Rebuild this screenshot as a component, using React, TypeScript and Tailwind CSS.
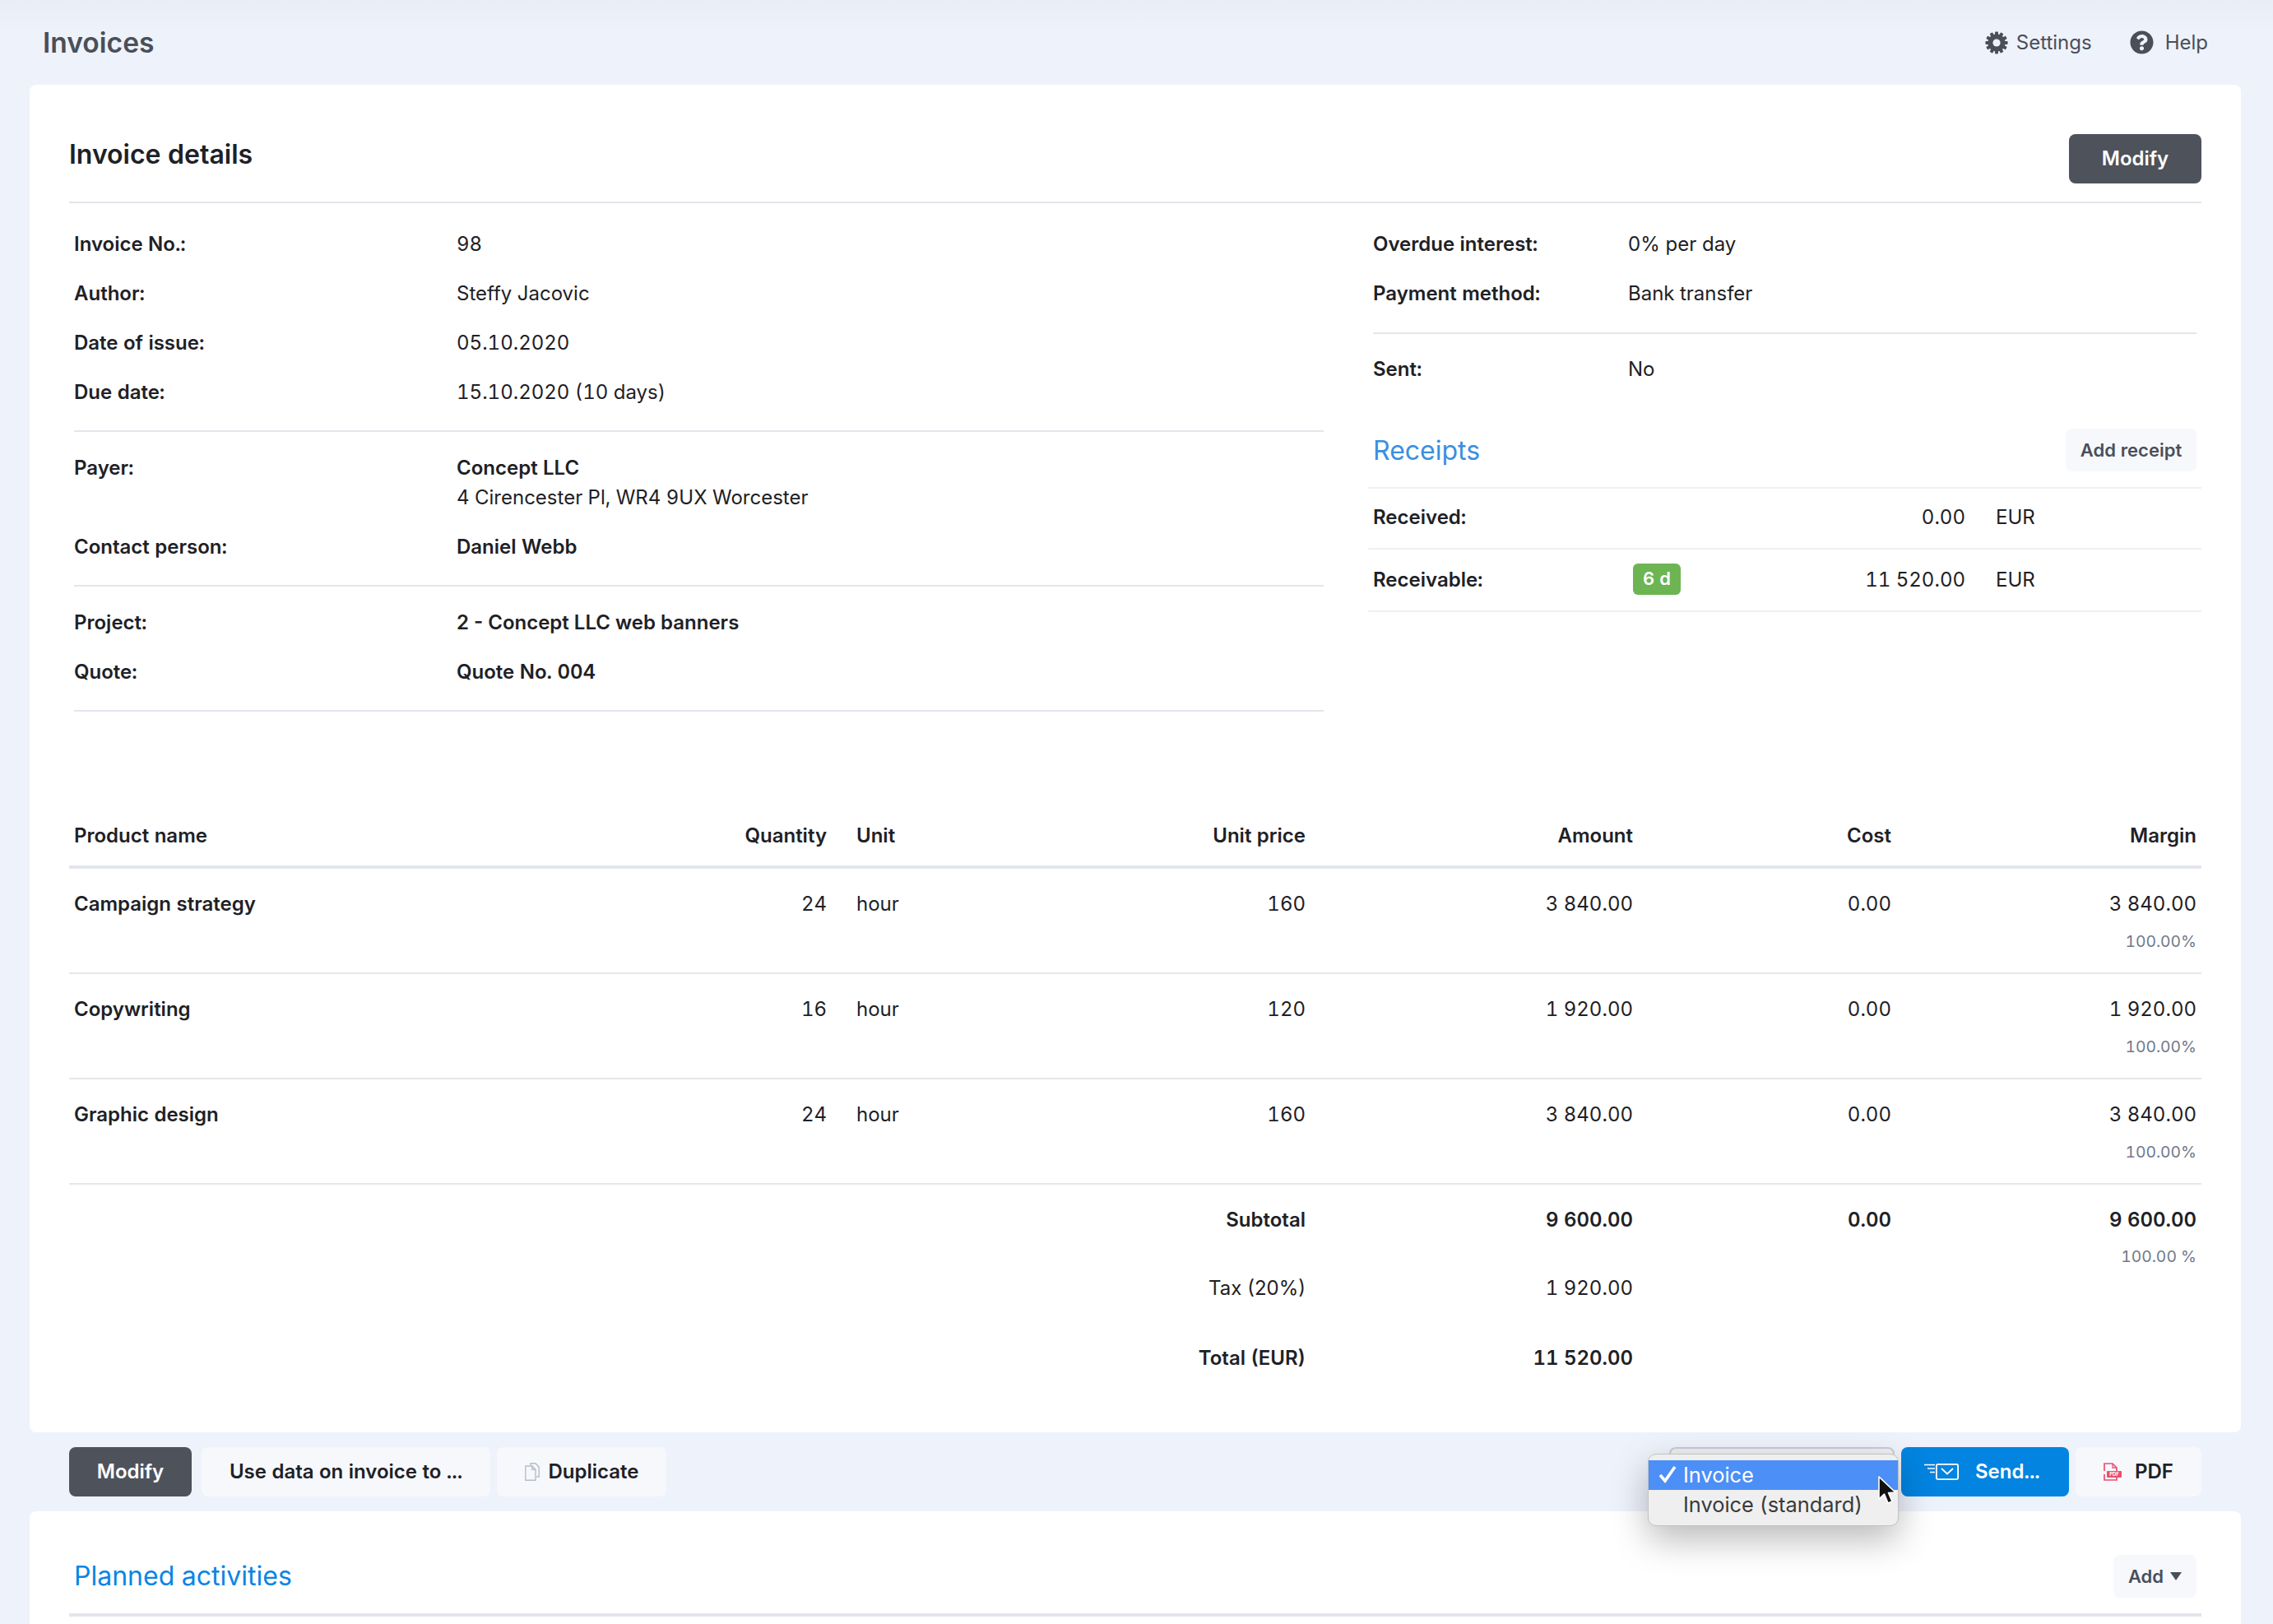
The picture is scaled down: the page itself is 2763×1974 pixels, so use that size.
import React from "react";
import { FaQuestionCircle } from "react-icons/fa";

const cols = "grid grid-cols-[600px_351px_200px_358px_398px_314px_371px]";

function Gear() {
  const teeth = [0, 30, 60, 90, 120, 150];
  return (
    <svg width="28" height="28" viewBox="0 0 28 28" fill="#4a4f59">
      {teeth.map((a) => (
        <rect key={a} x="12" y="0.4" width="4" height="27.2" rx="1" transform={`rotate(${a} 14 14)`} />
      ))}
      <circle cx="14" cy="14" r="10.6" />
      <circle cx="14" cy="14" r="4.6" fill="#eef2fb" />
    </svg>
  );
}

function SendIcon() {
  return (
    <svg width="42" height="20" viewBox="0 0 42 20" fill="none" stroke="#fff" strokeWidth="1.8">
      <rect x="14.9" y="0.9" width="26.2" height="18.2" rx="1.5" />
      <path d="M21 6 L28 12.5 L35 6" />
      <path d="M0 1.5h13M4 6h9M7 10.5h6" strokeWidth="1.5" />
    </svg>
  );
}

function PdfIcon() {
  return (
    <svg width="22" height="22" viewBox="0 0 22 22" fill="none">
      <path d="M1 10V1h10l5 5v4M1 14v7h15v-4" stroke="#ec4f6e" strokeWidth="1.7" />
      <path d="M11 1v5h5" stroke="#ec4f6e" strokeWidth="1.3" />
      <rect x="4" y="10" width="18" height="8" rx="1" fill="#ec4f6e" />
      <text x="13" y="16.4" fontSize="6" fontWeight="700" fill="#fff" textAnchor="middle" fontFamily="Inter, sans-serif">PDF</text>
    </svg>
  );
}

function DupIcon() {
  return (
    <svg width="18" height="22" viewBox="0 0 18 22" fill="none" stroke="#b6bcc9" strokeWidth="1.4">
      <path d="M7 3.5V0.8h6l4.2 4.4V17h-3" />
      <path d="M0.8 4h8l4.2 4.4V21.2H0.8z" fill="#f6f8fc" />
      <path d="M8.8 4v4.4H13" />
    </svg>
  );
}

function Cursor() {
  return (
    <svg width="26" height="38" viewBox="0 0 26 38" className="absolute left-[278px] top-[26px]">
      <path d="M2 1 L2 28 L8.5 22 L13 33 L18 31 L13.5 20.5 L22 20 Z" fill="#111" stroke="#fff" strokeWidth="1.6" strokeLinejoin="round" />
    </svg>
  );
}

function Row({ label, children, w }: { label: string; children: React.ReactNode; w: string }) {
  return (
    <div className="flex py-3">
      <div className={`${w} font-semibold`}>{label}</div>
      <div>{children}</div>
    </div>
  );
}

function Hr({ className = "" }: { className?: string }) {
  return <div className={`h-[2px] bg-[#e3e6ec] ${className}`} />;
}

function Product({ name, q, price, amount }: { name: string; q: string; price: string; amount: string }) {
  return (
    <div className={`${cols} h-[128px] pt-[25px] border-b-2 border-[#e6e7ea]`}>
      <div className="pl-[6px] font-semibold">{name}</div>
      <div className="text-right pr-[30px]">{q}</div>
      <div className="pl-[6px]">hour</div>
      <div className="text-right pr-[6px]">{price}</div>
      <div className="text-right pr-[6px]">{amount}</div>
      <div className="text-right pr-[6px]">0.00</div>
      <div className="text-right pr-[6px]">
        <div>{amount}</div>
        <div className="mt-[9px] text-[19.3px] text-[#717a8a]">100.00%</div>
      </div>
    </div>
  );
}

export default function App() {
  return (
    <div className="relative h-[1974px] w-[2763px] overflow-hidden bg-[#eef2fb] bg-gradient-to-b from-[#e9edf6] to-[#eef2fb] bg-[length:100%_40px] bg-no-repeat text-[24px] leading-[36px] text-[#1e2126] font-['Inter',sans-serif] tabular-nums">
      <header className="h-[103px] flex items-center justify-between pl-[52px] pr-[79px] text-[#4a4f59]">
        <h1 className="text-[33.6px] font-semibold">Invoices</h1>
        <nav className="flex items-center">
          <Gear />
          <span className="ml-[10px]">Settings</span>
          <FaQuestionCircle className="ml-[46px] text-[29px] text-[#4a4f59]" />
          <span className="ml-[14px]">Help</span>
        </nav>
      </header>

      <main className="mx-[36px] w-[2688px]">
        <section className="bg-white rounded-[8px] px-[48px] h-[1638px]">
          <div className="flex justify-between pt-[60px] pb-[22px]">
            <h2 className="mt-[7px] text-[32px] font-semibold">Invoice details</h2>
            <button className="h-[60px] w-[161px] rounded-[8px] bg-[#4e525b] text-white font-semibold">Modify</button>
          </div>
          <Hr />

          <div className="flex pt-[20px]">
            <div className="w-[1525px] pl-[6px]">
              <Row label="Invoice No.:" w="w-[465px]">98</Row>
              <Row label="Author:" w="w-[465px]">Steffy Jacovic</Row>
              <Row label="Date of issue:" w="w-[465px]">05.10.2020</Row>
              <Row label="Due date:" w="w-[465px]">15.10.2020 (10 days)</Row>
              <Hr className="mt-4 mb-[14px]" />
              <Row label="Payer:" w="w-[465px]">
                <div className="font-semibold">Concept LLC</div>
                <div>4 Cirencester Pl, WR4 9UX Worcester</div>
              </Row>
              <Row label="Contact person:" w="w-[465px]"><span className="font-semibold">Daniel Webb</span></Row>
              <Hr className="mt-4 mb-[14px]" />
              <Row label="Project:" w="w-[465px]"><span className="font-semibold normal-nums">2 - Concept LLC web banners</span></Row>
              <Row label="Quote:" w="w-[465px]"><span className="font-semibold">Quote No. 004</span></Row>
              <Hr className="mt-[16px]" />
            </div>

            <div className="ml-[54px] w-[1013px]">
              <div className="px-[6px]">
                <Row label="Overdue interest:" w="w-[310px]"><span className="normal-nums">0% per day</span></Row>
                <Row label="Payment method:" w="w-[310px]">Bank transfer</Row>
                <Hr className="mt-[17px] mb-[13px]" />
                <Row label="Sent:" w="w-[310px]">No</Row>
                <div className="mt-[42px] flex items-center justify-between h-[52px]">
                  <h3 className="pt-[2px] text-[32px] text-[#3a8fe0]">Receipts</h3>
                  <button className="h-[52px] w-[159px] rounded-[8px] bg-[#f6f8fc] text-[22px] font-semibold text-[#4a4f59]">Add receipt</button>
                </div>
              </div>
              <Hr className="mt-[19px] bg-[#eef0f4]" />
              <div className="flex items-start pt-[17px] pb-[19px] px-[6px]">
                <div className="w-[316px] font-semibold">Received:</div>
                <div className="w-[58px]" />
                <div className="w-[346px] text-right">0.00</div>
                <div className="ml-[37px]">EUR</div>
              </div>
              <Hr className="bg-[#eef0f4]" />
              <div className="flex items-start pt-[19px] pb-[19px] px-[6px]">
                <div className="w-[316px] font-semibold">Receivable:</div>
                <div className="w-[58px] h-[38px] -mt-[2px] rounded-[6px] bg-[#6cb552] text-white text-[22px] leading-[36px] font-semibold text-center">6 d</div>
                <div className="w-[346px] text-right">11 520.00</div>
                <div className="ml-[37px]">EUR</div>
              </div>
              <Hr className="bg-[#eef0f4]" />
            </div>
          </div>

          <div className={`${cols} mt-[133px] pb-[18px] border-b-4 border-[#e2e5ee] font-semibold`}>
            <div className="pl-[6px]">Product name</div>
            <div className="text-right pr-[30px]">Quantity</div>
            <div className="pl-[6px]">Unit</div>
            <div className="text-right pr-[6px]">Unit price</div>
            <div className="text-right pr-[6px]">Amount</div>
            <div className="text-right pr-[6px]">Cost</div>
            <div className="text-right pr-[6px]">Margin</div>
          </div>

          <Product name="Campaign strategy" q="24" price="160" amount="3 840.00" />
          <Product name="Copywriting" q="16" price="120" amount="1 920.00" />
          <Product name="Graphic design" q="24" price="160" amount="3 840.00" />

          <div className={`${cols} h-[108px] pt-[25px] font-semibold`}>
            <div className="col-span-4 text-right pr-[6px]">Subtotal</div>
            <div className="text-right pr-[6px]">9 600.00</div>
            <div className="text-right pr-[6px]">0.00</div>
            <div className="text-right pr-[6px]">
              <div>9 600.00</div>
              <div className="mt-[8px] text-[19.3px] font-normal text-[#717a8a]">100.00 %</div>
            </div>
          </div>
          <div className={`${cols} h-[84px]`}>
            <div className="col-span-4 text-right pr-[6px] normal-nums">Tax (20%)</div>
            <div className="text-right pr-[6px]">1 920.00</div>
          </div>
          <div className={`${cols} pt-[1px] font-semibold`}>
            <div className="col-span-4 text-right pr-[6px]">Total (EUR)</div>
            <div className="text-right pr-[6px]">11 520.00</div>
          </div>
        </section>

        <div className="flex items-center justify-between h-[96px] px-[48px] font-semibold">
          <div className="flex">
            <button className="h-[60px] w-[149px] rounded-[8px] bg-[#4e525b] text-white font-semibold">Modify</button>
            <button className="ml-[12px] h-[60px] w-[351px] rounded-[8px] bg-[#f6f8fc] font-semibold">Use data on invoice to ...</button>
            <button className="ml-[8px] h-[60px] w-[206px] rounded-[8px] bg-[#f6f8fc] font-semibold flex items-center justify-center gap-[11px]">
              <DupIcon />Duplicate
            </button>
          </div>
          <div className="flex">
            <button className="h-[60px] w-[204px] rounded-[8px] bg-[#0284e0] text-white font-semibold flex items-center pl-[28px] gap-[20px]">
              <SendIcon />Send...
            </button>
            <button className="ml-[8px] h-[60px] w-[153px] rounded-[8px] bg-[#f6f8fc] font-semibold flex items-center justify-center gap-[16px]">
              <PdfIcon />PDF
            </button>
          </div>
        </div>

        <section className="bg-white rounded-[8px] px-[48px] h-[200px]">
          <div className="flex items-center justify-between h-[124px] pt-[34px] pr-[6px]">
            <h3 className="pl-[6px] text-[32px] text-[#0885e4]">Planned activities</h3>
            <button className="h-[52px] w-[101px] rounded-[8px] bg-[#f6f8fc] text-[22px] font-semibold text-[#4a4f59] flex items-center justify-center gap-[8px]">
              Add
              <svg width="14" height="10" viewBox="0 0 14 10"><path d="M0 0h14L7 10z" fill="#4a4f59" /></svg>
            </button>
          </div>
          <div className="h-[4px] bg-[#e2e5ee]" />
        </section>
      </main>

      <div className="absolute left-[2029px] top-[1759px] h-[20px] w-[274px] rounded-t-[8px] border-2 border-[#c8ccd6] bg-[#f0f0f0]" />
      <div className="absolute left-[2003px] top-[1767px] h-[88px] w-[305px] rounded-[10px] border border-[#c2c2c2] bg-[#efefef] pt-[7px] text-[25.4px] leading-[36px] text-[#3a3a3a] shadow-[0_16px_44px_rgba(0,0,0,0.28)]">
        <div className="relative h-[36px] bg-[#4c8ff6] pl-[42px] text-white">
          <svg width="24" height="22" viewBox="0 0 24 22" className="absolute left-[12px] top-[6px]">
            <path d="M2 12 L8 19 L20 2" stroke="#fff" strokeWidth="3.6" fill="none" />
          </svg>
          Invoice
        </div>
        <div className="pl-[42px]">Invoice (standard)</div>
        <Cursor />
      </div>
    </div>
  );
}
